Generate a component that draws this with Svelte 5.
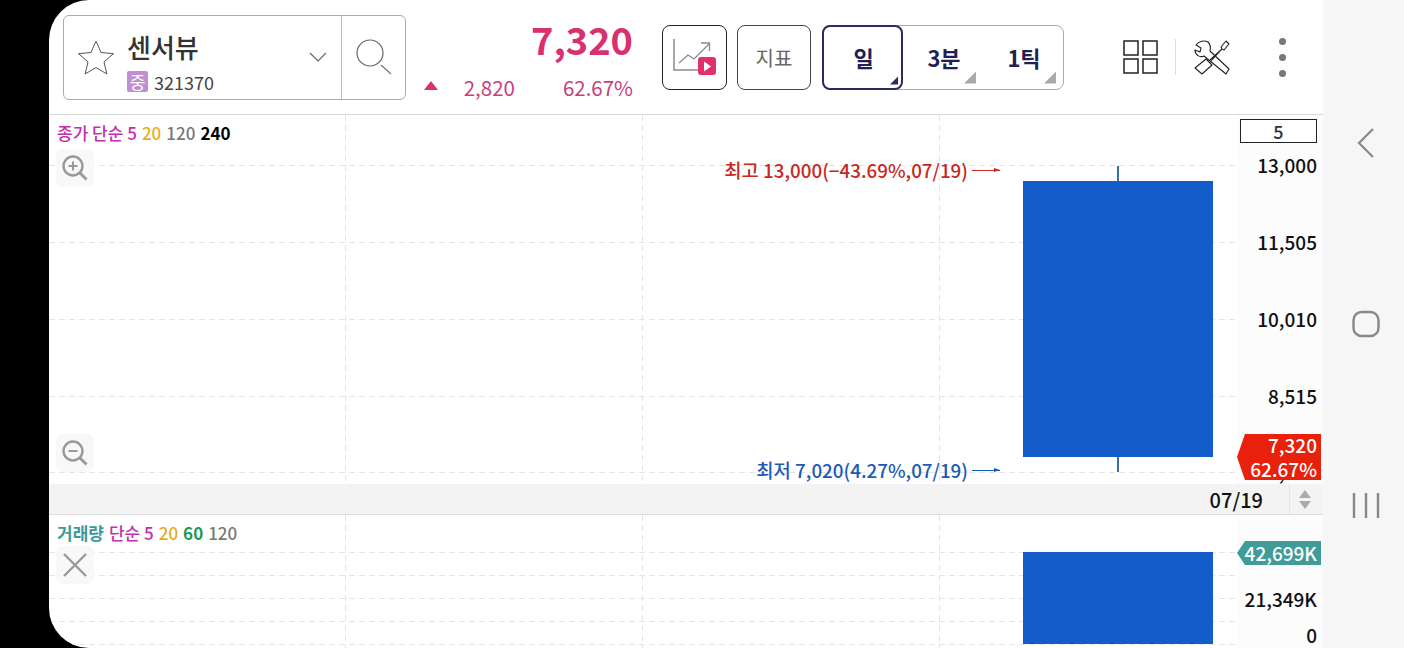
<script>
	const verticals = [296, 593, 890];
	const priceLines = [50, 127, 204, 281, 357];
	const volumeLines = [37, 60, 83, 106, 129];
	const priceTicks = [
		{ label: '13,000', y: 50 },
		{ label: '11,505', y: 127 },
		{ label: '10,010', y: 204 },
		{ label: '8,515', y: 281 },
		{ label: '7,020', y: 357 }
	];
	const volumeTicks = [
		{ label: '21,349K', y: 84 },
		{ label: '0', y: 120 }
	];
</script>

<div class="device">
	<main class="screen">
		<header class="toolbar">
			<div class="stock-box">
				<svg class="star" viewBox="0 0 38 36" width="38" height="36">
					<path d="M19 2l5 11.500 12.500 1.200-9.500 8.200 2.900 12.100L19 28.500 8.100 35l2.900-12.100-9.500-8.200L14 13.500z" fill="none" stroke="#555" stroke-width="1" stroke-linejoin="round" />
				</svg>
				<div class="stock-info">
					<div class="stock-name">센서뷰</div>
					<div class="stock-code"><span class="badge">중</span>321370</div>
				</div>
				<svg class="chevron" viewBox="0 0 18 10" width="18" height="10">
					<path d="M1 1l8 8 8-8" fill="none" stroke="#666" stroke-width="1.200" />
				</svg>
				<div class="search">
					<svg viewBox="0 0 36 36" width="36" height="36">
						<circle cx="14" cy="14" r="13" fill="none" stroke="#666" stroke-width="1.200" />
						<path d="M25 26l10 9" stroke="#777" stroke-width="1.200" />
					</svg>
				</div>
			</div>

			<div class="price">
				<div class="price-now">7,320</div>
				<div class="price-sub">
					<span class="up"></span>
					<span class="diff">2,820</span>
					<span class="pct">62.67%</span>
				</div>
			</div>

			<button class="tool-btn play-btn" aria-label="차트 재생">
				<svg viewBox="0 0 44 38" width="44" height="38">
					<path d="M1 1v31h25" fill="none" stroke="#8a8a8a" stroke-width="1.500" />
					<path d="M6 25l9-8 6 4 15-15M28 5h8.500v8" fill="none" stroke="#8a8a8a" stroke-width="1.300" />
					<rect x="25" y="19" width="18" height="18" rx="3" fill="#e0306f" />
					<path d="M31 23.500l7 5-7 5z" fill="#fff" />
				</svg>
			</button>
			<button class="tool-btn indicator">지표</button>

			<div class="periods">
				<button class="period active">일<span class="corner"></span></button>
				<button class="period">3분<span class="corner"></span></button>
				<button class="period">1틱<span class="corner"></span></button>
			</div>

			<svg class="grid-icon" viewBox="0 0 35 34" width="35" height="34">
				<g fill="none" stroke="#222" stroke-width="1.500">
					<rect x="1" y="1" width="14" height="14" />
					<rect x="20" y="1" width="14" height="14" />
					<rect x="1" y="19" width="14" height="14" />
					<rect x="20" y="19" width="14" height="14" />
				</g>
			</svg>
			<span class="sep"></span>
			<svg class="tools-icon" viewBox="0 0 38 36" width="38" height="36">
				<g fill="#fff" stroke="#222" stroke-width="1.100" stroke-linejoin="round">
					<path d="M15 3C11 1 6 2 3 6l5 3-1 4-5-2c0 5 5 8 9 6l22 18 3-5-19-18c1-4 0-7-2-9z" />
					<path d="M2 29l11-9 6 6-10 9z" />
					<path d="M17 21l12-11-1-2 5-6 3 3-5 6-2-1-11 12" />
				</g>
			</svg>
			<div class="more"><i></i><i></i><i></i></div>
		</header>

		<section class="panel price-panel">
			<div class="plot">
				<svg class="grid-lines">
					{#each priceLines as y}<line x1="0" x2="1188" y1={y + 0.5} y2={y + 0.5} />{/each}
					{#each verticals as x}<line x1={x + 0.5} x2={x + 0.5} y1="0" y2="369" />{/each}
				</svg>
				<div class="legend">
					<span class="magenta">종가 단순 5</span>
					<span class="amber">20</span>
					<span class="gray">120</span>
					<span class="black">240</span>
				</div>
				<button class="float-btn zoom-in" aria-label="확대">
					<svg viewBox="0 0 28 28" width="28" height="28">
						<circle cx="12" cy="12" r="9.500" fill="none" stroke="#999" stroke-width="2.400" />
						<path d="M12 7.500v9M7.500 12h9" stroke="#999" stroke-width="2" />
						<path d="M19 19l6.500 6.500" stroke="#999" stroke-width="2.800" />
					</svg>
				</button>
				<button class="float-btn zoom-out" aria-label="축소">
					<svg viewBox="0 0 28 28" width="28" height="28">
						<circle cx="12" cy="12" r="9.500" fill="none" stroke="#999" stroke-width="2.400" />
						<path d="M7.500 12h9" stroke="#999" stroke-width="2" />
						<path d="M19 19l6.500 6.500" stroke="#999" stroke-width="2.800" />
					</svg>
				</button>

				<div class="note high">최고 13,000(−43.69%,07/19)<span class="arrow"></span></div>
				<div class="note low">최저 7,020(4.27%,07/19)<span class="arrow"></span></div>

				<div class="wick"></div>
				<div class="candle"></div>
			</div>
			<div class="axis">
				<div class="interval">5</div>
				{#each priceTicks as tick}
					<span class="tick" style="top: {tick.y}px">{tick.label}</span>
				{/each}
				<div class="price-tag"><span>7,320</span><span>62.67%</span></div>
			</div>
		</section>

		<div class="date-strip">
			<span class="date">07/19</span>
			<div class="spinner"><i class="tri-up"></i><i class="tri-down"></i></div>
		</div>

		<section class="panel volume-panel">
			<div class="plot">
				<svg class="grid-lines">
					{#each volumeLines as y}<line x1="0" x2="1188" y1={y + 0.5} y2={y + 0.5} />{/each}
					{#each verticals as x}<line x1={x + 0.5} x2={x + 0.5} y1="0" y2="133" />{/each}
				</svg>
				<div class="legend">
					<span class="teal">거래량</span>
					<span class="magenta">단순 5</span>
					<span class="amber">20</span>
					<span class="green">60</span>
					<span class="gray">120</span>
				</div>
				<button class="float-btn close" aria-label="닫기">
					<svg viewBox="0 0 24 24" width="24" height="24">
						<path d="M1 1l22 22M23 1L1 23" stroke="#999" stroke-width="2.400" />
					</svg>
				</button>
				<div class="volume-bar"></div>
			</div>
			<div class="axis">
				{#each volumeTicks as tick}
					<span class="tick" style="top: {tick.y}px">{tick.label}</span>
				{/each}
				<div class="volume-tag">42,699K</div>
			</div>
		</section>
	</main>

	<nav class="softkeys">
		<svg viewBox="0 0 32 32" width="32" height="32">
			<path d="M23 2L9 16l14 14" fill="none" stroke="#888" stroke-width="2.200" />
		</svg>
		<svg viewBox="0 0 32 32" width="32" height="32">
			<rect x="3.500" y="4" width="25" height="24" rx="8" fill="none" stroke="#888" stroke-width="2.400" />
		</svg>
		<svg viewBox="0 0 32 32" width="32" height="32">
			<path d="M4 4v25M16 4v25M28 4v25" stroke="#888" stroke-width="2.400" />
		</svg>
	</nav>
</div>

<style>
	:global(body) {
		margin: 0;
		background: #000;
	}

	.device {
		display: flex;
		width: 1404px;
		height: 648px;
		background: #000;
		overflow: hidden;
		font-family: 'Noto Sans CJK KR', 'Noto Sans', sans-serif;
	}

	.screen {
		display: flex;
		flex-direction: column;
		width: 1274px;
		margin-left: 49px;
		background: #fff;
		border-radius: 40px 0 0 40px;
		overflow: hidden;
	}

	.toolbar {
		display: flex;
		align-items: center;
		flex: none;
		height: 115px;
		padding-left: 14px;
		box-sizing: border-box;
		border-bottom: 1px solid #d8d8d8;
	}

	.stock-box {
		display: flex;
		align-items: center;
		flex: none;
		width: 343px;
		height: 85px;
		box-sizing: border-box;
		border: 1px solid #aaa;
		border-radius: 6px;
		padding-left: 13px;
	}

	.stock-info {
		width: 174px;
		margin-left: 12px;
		padding-top: 9px;
	}

	.stock-name {
		font-size: 26px;
		font-weight: 500;
		line-height: 34px;
		color: #333;
	}

	.stock-code {
		display: flex;
		align-items: center;
		gap: 6px;
		font-size: 18px;
		line-height: 24px;
		margin-top: 6px;
		color: #444;
	}

	.badge {
		width: 21px;
		height: 21px;
		border-radius: 2px;
		background: #c08fd0;
		color: #fff;
		font-size: 17px;
		line-height: 21px;
		text-align: center;
	}

	.chevron {
		margin-left: 8px;
	}

	.search {
		display: flex;
		align-items: center;
		justify-content: center;
		width: 64px;
		height: 100%;
		margin-left: auto;
		border-left: 1px solid #bbb;
		box-sizing: border-box;
	}

	.price {
		width: 227px;
		color: #d9306f;
		text-align: right;
		flex: none;
	}

	.price-now {
		font-size: 38px;
		font-weight: 700;
		line-height: 52px;
		margin-top: -1px;
	}

	.price-sub {
		display: flex;
		align-items: center;
		justify-content: flex-end;
		font-size: 20.500px;
		line-height: 28px;
		margin-top: 8px;
		color: #c83f78;
	}

	.up {
		width: 0;
		height: 0;
		border-left: 7px solid transparent;
		border-right: 7px solid transparent;
		border-bottom: 9px solid #d9306f;
		margin-right: 26px;
		margin-bottom: 3px;
	}

	.pct {
		margin-left: 48px;
	}

	.tool-btn {
		display: flex;
		align-items: center;
		justify-content: center;
		flex: none;
		height: 65px;
		padding: 0;
		background: #fff;
		border: 1px solid #222;
		border-radius: 8px;
		font-family: inherit;
	}

	.play-btn {
		width: 65px;
		margin-left: 29px;
	}

	.indicator {
		width: 74px;
		margin-left: 10px;
		border-color: #444;
		font-size: 20px;
		color: #666;
	}

	.periods {
		display: flex;
		flex: none;
		width: 242px;
		height: 65px;
		margin-left: 11px;
		box-sizing: border-box;
		border: 1px solid #aaa;
		border-radius: 8px;
	}

	.period {
		position: relative;
		flex: 1;
		padding: 0 0 0 2px;
		background: none;
		border: 0;
		font-family: inherit;
		font-size: 22px;
		font-weight: 700;
		color: #1f2152;
	}

	.period.active {
		flex: none;
		width: 81px;
		margin: -1px 0 -1px -1px;
		border: 2px solid #2a2c5e;
		border-radius: 8px;
		box-sizing: border-box;
	}

	.corner {
		position: absolute;
		right: 7px;
		bottom: 5px;
		width: 12px;
		height: 12px;
		background: #aaa;
		clip-path: polygon(100% 0, 100% 100%, 0 100%);
	}

	.period.active .corner {
		right: 3px;
		bottom: 3px;
		width: 8px;
		height: 8px;
		background: #2a2c5e;
	}

	.grid-icon {
		margin-left: 59px;
	}

	.sep {
		width: 1px;
		height: 36px;
		margin-left: 17px;
		background: #ddd;
	}

	.tools-icon {
		margin-left: 17px;
	}

	.more {
		display: flex;
		flex-direction: column;
		gap: 9px;
		margin-left: 48px;
	}

	.more i {
		width: 7px;
		height: 7px;
		border-radius: 50%;
		background: #777;
	}

	.panel {
		display: flex;
		flex: none;
	}

	.price-panel {
		height: 369px;
	}

	.volume-panel {
		height: 133px;
	}

	.plot {
		position: relative;
		width: 1188px;
		overflow: hidden;
	}

	.grid-lines {
		position: absolute;
		inset: 0;
		width: 100%;
		height: 100%;
	}

	.grid-lines line {
		stroke: #e4e4e4;
		stroke-width: 1;
		stroke-dasharray: 6 4;
	}

	.legend {
		position: absolute;
		left: 8px;
		top: 6px;
		display: flex;
		gap: 5px;
		font-size: 17px;
		font-weight: 500;
		line-height: 24px;
	}

	.magenta { color: #c22fae; }
	.amber { color: #e8ab1e; }
	.gray { color: #777; }
	.black { color: #000; font-weight: 700; }
	.teal { color: #3a9a9a; font-weight: 700; }
	.green { color: #1f9a4f; font-weight: 700; }

	.float-btn {
		position: absolute;
		left: 7px;
		display: flex;
		align-items: center;
		justify-content: center;
		width: 38px;
		height: 38px;
		padding: 0;
		background: #f8f8f8;
		border: 0;
		border-radius: 7px;
	}

	.zoom-in { top: 34px; }
	.zoom-out { top: 319px; }
	.close { top: 31px; }

	.note {
		position: absolute;
		right: 237px;
		display: flex;
		align-items: center;
		gap: 4px;
		font-size: 18.800px;
		font-weight: 500;
		line-height: 22px;
		white-space: nowrap;
	}

	.note.high {
		top: 44px;
		color: #c8281e;
	}

	.note.low {
		top: 344px;
		color: #1a5bb5;
	}

	.arrow {
		position: relative;
		width: 28px;
		height: 1px;
		background: currentColor;
	}

	.arrow::after {
		content: '';
		position: absolute;
		right: 0;
		top: -2px;
		border-left: 6px solid currentColor;
		border-top: 2.500px solid transparent;
		border-bottom: 2.500px solid transparent;
	}

	.wick {
		position: absolute;
		left: 1068px;
		top: 51px;
		width: 2px;
		height: 306px;
		background: #3a6ea5;
	}

	.candle {
		position: absolute;
		left: 974px;
		top: 66px;
		width: 190px;
		height: 276px;
		background: #135cc9;
	}

	.volume-bar {
		position: absolute;
		left: 974px;
		top: 37px;
		width: 190px;
		bottom: 4px;
		background: #135cc9;
	}

	.axis {
		position: relative;
		width: 86px;
		background: #fcfcfc;
		font-size: 19px;
		font-weight: 500;
		color: #111;
	}

	.tick {
		position: absolute;
		right: 6px;
		line-height: 24px;
		transform: translateY(-50%);
	}

	.interval {
		position: absolute;
		left: 3px;
		top: 4px;
		width: 77px;
		height: 24px;
		box-sizing: border-box;
		border: 1px solid #222;
		background: #fff;
		text-align: center;
		line-height: 22px;
		font-size: 18px;
		color: #333;
	}

	.price-tag {
		position: absolute;
		left: 0;
		top: 319px;
		display: flex;
		flex-direction: column;
		align-items: flex-end;
		justify-content: center;
		width: 84px;
		height: 46px;
		padding-right: 4px;
		box-sizing: border-box;
		background: #e8200c;
		color: #fff;
		line-height: 24px;
		clip-path: polygon(8px 0, 100% 0, 100% 100%, 8px 100%, 0 50%);
	}

	.volume-tag {
		position: absolute;
		left: 0;
		top: 26px;
		width: 84px;
		height: 24px;
		padding-right: 4px;
		box-sizing: border-box;
		background: #3f9c98;
		color: #fff;
		text-align: right;
		line-height: 24px;
		clip-path: polygon(8px 0, 100% 0, 100% 100%, 8px 100%, 0 50%);
	}

	.date-strip {
		display: flex;
		align-items: center;
		justify-content: flex-end;
		flex: none;
		height: 31px;
		padding-right: 3px;
		box-sizing: border-box;
		background: #f3f3f3;
		border-bottom: 1px solid #ddd;
		font-size: 20px;
		font-weight: 500;
		color: #111;
	}

	.date {
		margin-right: 26px;
	}

	.spinner {
		display: flex;
		flex-direction: column;
		align-items: center;
		justify-content: center;
		gap: 3px;
		width: 30px;
		height: 100%;
		border-left: 1px solid #e4e4e4;
	}

	.tri-up,
	.tri-down {
		width: 0;
		height: 0;
		border-left: 6px solid transparent;
		border-right: 6px solid transparent;
	}

	.tri-up { border-bottom: 8px solid #aaa; }
	.tri-down { border-top: 8px solid #aaa; }

	.softkeys {
		display: flex;
		flex-direction: column;
		align-items: center;
		gap: 149px;
		flex: 1;
		padding-top: 127px;
		padding-left: 4px;
		box-sizing: border-box;
		background: #f6f6f6;
	}

	.softkeys svg {
		flex: none;
	}
</style>
